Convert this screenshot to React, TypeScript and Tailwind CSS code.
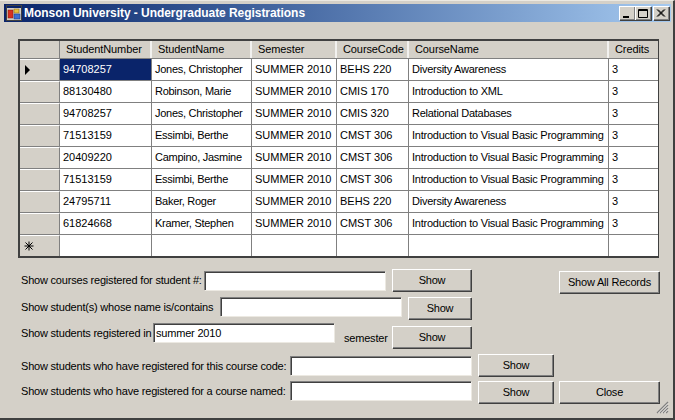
const rows = [
  ["94708257", "Jones, Christopher", "SUMMER 2010", "BEHS 220", "Diversity Awareness", "3"],
  ["88130480", "Robinson, Marie", "SUMMER 2010", "CMIS 170", "Introduction to XML", "3"],
  ["94708257", "Jones, Christopher", "SUMMER 2010", "CMIS 320", "Relational Databases", "3"],
  ["71513159", "Essimbi, Berthe", "SUMMER 2010", "CMST 306", "Introduction to Visual Basic Programming", "3"],
  ["20409220", "Campino, Jasmine", "SUMMER 2010", "CMST 306", "Introduction to Visual Basic Programming", "3"],
  ["71513159", "Essimbi, Berthe", "SUMMER 2010", "CMST 306", "Introduction to Visual Basic Programming", "3"],
  ["24795711", "Baker, Roger", "SUMMER 2010", "BEHS 220", "Diversity Awareness", "3"],
  ["61824668", "Kramer, Stephen", "SUMMER 2010", "CMST 306", "Introduction to Visual Basic Programming", "3"],
  ["", "", "", "", "", ""],
];

const headers = ["StudentNumber", "StudentName", "Semester", "CourseCode", "CourseName", "Credits"];

// lowercase text runs narrower than caps and digits in the original font
const colTracking = ["tracking-normal", "tracking-[-0.27px]", "tracking-normal", "tracking-normal", "tracking-[-0.25px]", "tracking-normal"];

const gridCols = "grid grid-cols-[40px_92px_100px_85px_72px_200px_49px]";

function Button({ label, className }: { label: string; className: string }) {
  return (
    <button className={`h-[22px] shrink-0 bg-[#d4d0c8] border-t border-l border-white shadow-[inset_-1px_-1px_0_#808080,1px_1px_0_#404040] text-black ${className}`}>
      {label}
    </button>
  );
}

function Field({ value, className }: { value?: string; className: string }) {
  return (
    <div className={`h-[19px] shrink-0 bg-white border-t border-l border-[#808080] shadow-[inset_1px_1px_0_#404040,1px_1px_0_#ece9e2] pl-[2px] leading-[18px] text-black ${className}`}>
      {value}
    </div>
  );
}

function WindowIcon() {
  return (
    <svg width="16" height="16" viewBox="0 0 16 16" className="shrink-0">
      <rect x="0.5" y="0.5" width="15" height="15" fill="#d4d0c8" stroke="#404040" />
      <rect x="1" y="1" width="14" height="2" fill="#0a246a" />
      <rect x="2" y="5" width="5" height="8" fill="#d83020" stroke="#7a1810" strokeWidth="0.5" />
      <rect x="8" y="4" width="5" height="4" fill="#e8c040" stroke="#806010" strokeWidth="0.5" />
      <rect x="8" y="9" width="6" height="5" fill="#4070d0" stroke="#103080" strokeWidth="0.5" />
    </svg>
  );
}

function CaptionButton({ children }: { children: React.ReactNode }) {
  return (
    <div className="w-[16px] h-[14px] bg-[#d4d0c8] border-t border-l border-white shadow-[inset_-1px_-1px_0_#808080,1px_1px_0_#404040]">
      <svg width="14" height="13" viewBox="0 0 14 13">{children}</svg>
    </div>
  );
}

function TitleBar() {
  return (
    <div className="h-[18px] flex items-center pl-[2px] pr-[2px] bg-gradient-to-r from-[#0a246a] to-[#a6caf0]">
      <WindowIcon />
      <span className="ml-[2px] text-white font-bold text-[12px] tracking-[-0.05px] whitespace-nowrap">
        Monson University - Undergraduate Registrations
      </span>
      <div className="ml-auto flex">
        <CaptionButton>
          <rect x="3" y="9" width="6" height="2" fill="#000" />
        </CaptionButton>
        <CaptionButton>
          <path d="M2.5 2.5h9v8h-9z M2.5 3.5h9" fill="none" stroke="#000" />
        </CaptionButton>
        <div className="w-[2px]" />
        <CaptionButton>
          <path d="M3 2.5l7 7 M4 2.5l7 7 M10 2.5l-7 7 M11 2.5l-7 7" fill="none" stroke="#000" />
        </CaptionButton>
      </div>
    </div>
  );
}

function DataGrid() {
  return (
    <div className="w-[641px] ml-[14px] mt-[17px] border-t-2 border-l-2 border-b-2 border-r border-[#404040] bg-[#d4d0c8]">
      <div className={`${gridCols} h-[17px]`}>
        <div className="border-r border-[#808080]" />
        {headers.map((h) => (
          <div key={h} className="pl-[6px] leading-[17px] border-r-2 border-white/70 last:border-r-0 text-black tracking-[-0.1px]">
            {h}
          </div>
        ))}
      </div>
      {rows.map((r, i) => (
        <div key={i} className={`${gridCols} h-[22px] border-t border-[#808080]`}>
          <div className="relative bg-[#d4d0c8] border-r border-[#808080] border-t border-t-white">
            {i === 0 && (
              <svg width="8" height="10" viewBox="0 0 8 10" className="absolute left-[4px] top-[5px]">
                <path d="M1 0l5 5-5 5z" fill="#000" />
              </svg>
            )}
            {i === rows.length - 1 && (
              <svg width="10" height="10" viewBox="0 0 10 10" className="absolute left-[4px] top-[5px]">
                <path d="M5 0.5v9 M0.5 5h9 M1.5 1.5l7 7 M8.5 1.5l-7 7" stroke="#000" fill="none" />
              </svg>
            )}
          </div>
          {r.map((c, j) => (
            <div
              key={j}
              className={`pl-[3px] leading-[21px] whitespace-nowrap overflow-hidden border-r border-[#808080] last:border-r-0 ${colTracking[j]} ${
                i === 0 && j === 0 ? "bg-[#0a246a] text-white" : "bg-white text-black"
              }`}
            >
              {c}
            </div>
          ))}
        </div>
      ))}
    </div>
  );
}

function ResizeGrip() {
  return (
    <svg width="13" height="13" viewBox="0 0 13 13" className="absolute right-[4px] bottom-[4px]">
      <path d="M12 1L1 12 M12 4L4 12 M12 7L7 12 M12 10L10 12" stroke="#808080" strokeWidth="1.3" fill="none" />
      <path d="M12 2.5L2.5 12 M12 5.5L5.5 12 M12 8.5L8.5 12" stroke="#fff" strokeWidth="0.6" fill="none" />
    </svg>
  );
}

export default function App() {
  return (
    <div className="relative w-[675px] h-[420px] overflow-hidden bg-[#d4d0c8] border-t border-t-[#ece9e2] border-r-2 border-r-[#404040] border-b-2 border-b-[#404040] text-[11px] tracking-[-0.2px] font-['Liberation_Sans',Arial,sans-serif]">
      <div className="pl-[4px] pr-[2px] pt-[3px]">
        <TitleBar />
        <DataGrid />
        <div className="pl-[17px] whitespace-nowrap">
          <div className="flex items-start mt-[13px]">
            <span className="w-[183px] pt-[1px]">Show courses registered for student #:</span>
            <Field className="w-[181px]" />
            <Button label="Show" className="w-[79px] ml-[7px] -mt-[2px]" />
            <Button label="Show All Records" className="w-[100px] ml-[88px]" />
          </div>
          <div className="flex items-start mt-[4px]">
            <span className="w-[199px] pt-[2px]">Show student(s) whose name is/contains</span>
            <Field className="w-[181px]" />
            <Button label="Show" className="w-[63px] ml-[7px]" />
          </div>
          <div className="flex items-start mt-[4px]">
            <span className="w-[132px] pt-[2px]">Show students registered in</span>
            <Field value="summer 2010" className="w-[181px]" />
            <span className="ml-[10px] pt-[7px] w-[41px]">semester</span>
            <Button label="Show" className="w-[79px] ml-[7px] mt-[3px]" />
          </div>
          <div className="flex items-start mt-[8px]">
            <span className="w-[269px] pt-[2px]">Show students who have registered for this course code:</span>
            <Field className="w-[181px]" />
            <Button label="Show" className="w-[75px] ml-[7px] -mt-[2px]" />
          </div>
          <div className="flex items-start mt-[5px]">
            <span className="w-[269px] pt-[2px]">Show students who have registered for a course named:</span>
            <Field className="w-[181px]" />
            <Button label="Show" className="w-[75px] ml-[7px]" />
            <Button label="Close" className="w-[100px] ml-[6px]" />
          </div>
        </div>
      </div>
      <ResizeGrip />
    </div>
  );
}
